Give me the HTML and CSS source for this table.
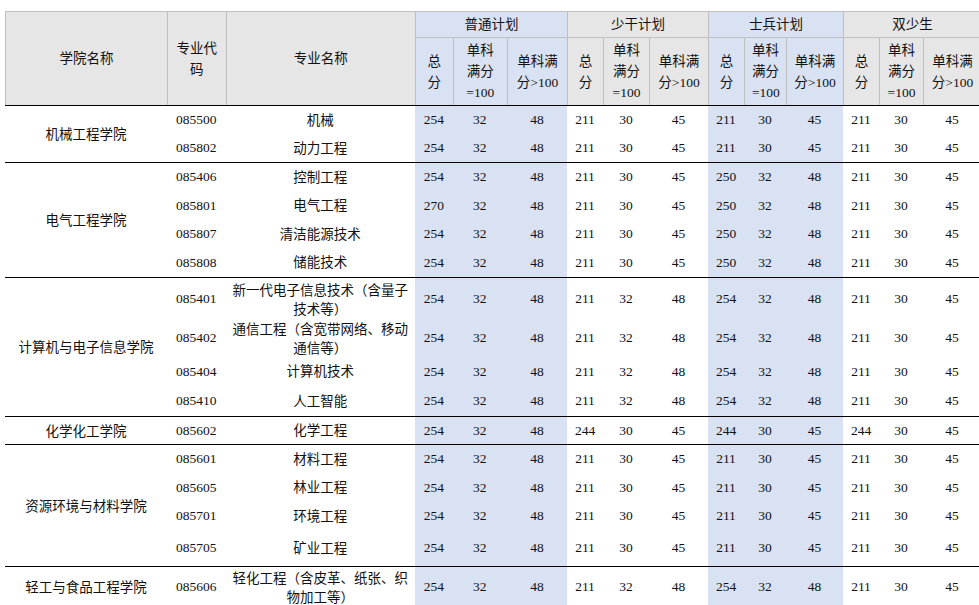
FILE: index.html
```html
<!DOCTYPE html>
<html lang="zh-CN">
<head>
<meta charset="utf-8">
<title>复试分数线</title>
<link rel="stylesheet" href="styles.css">
</head>
<body>
<div class="wrap">
<table class="score">
  <colgroup>
    <col class="c-college"><col class="c-code"><col class="c-major">
    <col class="c-t1"><col class="c-s1"><col class="c-m1">
    <col class="c-t2"><col class="c-s2"><col class="c-m2">
    <col class="c-t3"><col class="c-s3"><col class="c-m3">
    <col class="c-t4"><col class="c-s4"><col class="c-m4">
  </colgroup>
  <thead>
    <tr class="hr1">
      <th rowspan="2" class="grey">学院名称</th>
      <th rowspan="2" class="grey sub">专业代码</th>
      <th rowspan="2" class="grey">专业名称</th>
      <th colspan="3" class="blue">普通计划</th>
      <th colspan="3" class="grey">少干计划</th>
      <th colspan="3" class="blue">士兵计划</th>
      <th colspan="3" class="grey">双少生</th>
    </tr>
    <tr class="hr2">
      <th class="blue sub">总分</th><th class="blue sub">单科满分=100</th><th class="blue sub">单科满分&gt;100</th>
      <th class="grey sub">总分</th><th class="grey sub">单科满分=100</th><th class="grey sub">单科满分&gt;100</th>
      <th class="blue sub">总分</th><th class="blue sub">单科满分=100</th><th class="blue sub">单科满分&gt;100</th>
      <th class="grey sub">总分</th><th class="grey sub">单科满分=100</th><th class="grey sub">单科满分&gt;100</th>
    </tr>
  </thead>
  <tbody>
    <tr class="g h29">
      <td rowspan="2" class="cn">机械工程学院</td><td>085500</td><td class="major">机械</td>
      <td class="b">254</td><td class="b">32</td><td class="b">48</td>
      <td>211</td><td>30</td><td>45</td>
      <td class="b">211</td><td class="b">30</td><td class="b">45</td>
      <td>211</td><td>30</td><td>45</td>
    </tr>
    <tr class="h28">
      <td>085802</td><td class="major">动力工程</td>
      <td class="b">254</td><td class="b">32</td><td class="b">48</td>
      <td>211</td><td>30</td><td>45</td>
      <td class="b">211</td><td class="b">30</td><td class="b">45</td>
      <td>211</td><td>30</td><td>45</td>
    </tr>

    <tr class="g h29">
      <td rowspan="4" class="cn">电气工程学院</td><td>085406</td><td class="major">控制工程</td>
      <td class="b">254</td><td class="b">32</td><td class="b">48</td>
      <td>211</td><td>30</td><td>45</td>
      <td class="b">250</td><td class="b">32</td><td class="b">48</td>
      <td>211</td><td>30</td><td>45</td>
    </tr>
    <tr class="h29">
      <td>085801</td><td class="major">电气工程</td>
      <td class="b">270</td><td class="b">32</td><td class="b">48</td>
      <td>211</td><td>30</td><td>45</td>
      <td class="b">250</td><td class="b">32</td><td class="b">48</td>
      <td>211</td><td>30</td><td>45</td>
    </tr>
    <tr class="h28">
      <td>085807</td><td class="major">清洁能源技术</td>
      <td class="b">254</td><td class="b">32</td><td class="b">48</td>
      <td>211</td><td>30</td><td>45</td>
      <td class="b">250</td><td class="b">32</td><td class="b">48</td>
      <td>211</td><td>30</td><td>45</td>
    </tr>
    <tr class="h29">
      <td>085808</td><td class="major">储能技术</td>
      <td class="b">254</td><td class="b">32</td><td class="b">48</td>
      <td>211</td><td>30</td><td>45</td>
      <td class="b">250</td><td class="b">32</td><td class="b">48</td>
      <td>211</td><td>30</td><td>45</td>
    </tr>

    <tr class="g h42">
      <td rowspan="4" class="cn">计算机与电子信息学院</td><td>085401</td><td class="major ml">新一代电子信息技术（含量子技术等）</td>
      <td class="b">254</td><td class="b">32</td><td class="b">48</td>
      <td>211</td><td>32</td><td>48</td>
      <td class="b">254</td><td class="b">32</td><td class="b">48</td>
      <td>211</td><td>30</td><td>45</td>
    </tr>
    <tr class="h38">
      <td>085402</td><td class="major ml">通信工程（含宽带网络、移动通信等）</td>
      <td class="b">254</td><td class="b">32</td><td class="b">48</td>
      <td>211</td><td>32</td><td>48</td>
      <td class="b">254</td><td class="b">32</td><td class="b">48</td>
      <td>211</td><td>30</td><td>45</td>
    </tr>
    <tr class="h29">
      <td>085404</td><td class="major">计算机技术</td>
      <td class="b">254</td><td class="b">32</td><td class="b">48</td>
      <td>211</td><td>32</td><td>48</td>
      <td class="b">254</td><td class="b">32</td><td class="b">48</td>
      <td>211</td><td>30</td><td>45</td>
    </tr>
    <tr class="h30">
      <td>085410</td><td class="major">人工智能</td>
      <td class="b">254</td><td class="b">32</td><td class="b">48</td>
      <td>211</td><td>32</td><td>48</td>
      <td class="b">254</td><td class="b">32</td><td class="b">48</td>
      <td>211</td><td>30</td><td>45</td>
    </tr>

    <tr class="g h28">
      <td class="cn">化学化工学院</td><td>085602</td><td class="major">化学工程</td>
      <td class="b">254</td><td class="b">32</td><td class="b">48</td>
      <td>244</td><td>30</td><td>45</td>
      <td class="b">244</td><td class="b">30</td><td class="b">45</td>
      <td>244</td><td>30</td><td>45</td>
    </tr>

    <tr class="g h29">
      <td rowspan="4" class="cn">资源环境与材料学院</td><td>085601</td><td class="major">材料工程</td>
      <td class="b">254</td><td class="b">32</td><td class="b">48</td>
      <td>211</td><td>30</td><td>45</td>
      <td class="b">211</td><td class="b">30</td><td class="b">45</td>
      <td>211</td><td>30</td><td>45</td>
    </tr>
    <tr class="h29">
      <td>085605</td><td class="major">林业工程</td>
      <td class="b">254</td><td class="b">32</td><td class="b">48</td>
      <td>211</td><td>30</td><td>45</td>
      <td class="b">211</td><td class="b">30</td><td class="b">45</td>
      <td>211</td><td>30</td><td>45</td>
    </tr>
    <tr class="h28">
      <td>085701</td><td class="major">环境工程</td>
      <td class="b">254</td><td class="b">32</td><td class="b">48</td>
      <td>211</td><td>30</td><td>45</td>
      <td class="b">211</td><td class="b">30</td><td class="b">45</td>
      <td>211</td><td>30</td><td>45</td>
    </tr>
    <tr class="h36">
      <td>085705</td><td class="major">矿业工程</td>
      <td class="b">254</td><td class="b">32</td><td class="b">48</td>
      <td>211</td><td>30</td><td>45</td>
      <td class="b">211</td><td class="b">30</td><td class="b">45</td>
      <td>211</td><td>30</td><td>45</td>
    </tr>

    <tr class="g h40">
      <td class="cn">轻工与食品工程学院</td><td>085606</td><td class="major ml">轻化工程（含皮革、纸张、织物加工等）</td>
      <td class="b">254</td><td class="b">32</td><td class="b">48</td>
      <td>211</td><td>32</td><td>48</td>
      <td class="b">254</td><td class="b">32</td><td class="b">48</td>
      <td>211</td><td>30</td><td>45</td>
    </tr>
  </tbody>
</table>
</div>
</body>
</html>
```

FILE: styles.css
```css
html, body {
  margin: 0;
  padding: 0;
  background: #ffffff;
}

.wrap {
  width: 979px;
  height: 605px;
  overflow: hidden;
  padding: 11px 0 0 5px;
  box-sizing: border-box;
}

.score {
  table-layout: fixed;
  width: 976px;
  border-collapse: separate;
  border-spacing: 0;
  font-family: "Liberation Serif", "Noto Sans CJK SC", serif;
  font-size: 13.5px;
  color: #111111;
}

.c-college { width: 162px; }
.c-code { width: 58.5px; }
.c-major { width: 189.5px; }
.c-t1 { width: 37.5px; }
.c-s1 { width: 54.5px; }
.c-m1 { width: 60px; }
.c-t2 { width: 36px; }
.c-s2 { width: 46px; }
.c-m2 { width: 59px; }
.c-t3 { width: 36px; }
.c-s3 { width: 42px; }
.c-m3 { width: 57px; }
.c-t4 { width: 36px; }
.c-s4 { width: 44px; }
.c-m4 { width: 58px; }

.score th {
  font-weight: normal;
  border-top: 1px solid #bfbfbf;
  border-left: 1px solid #bfbfbf;
  padding: 0 4px;
  line-height: 21px;
  text-align: center;
  vertical-align: middle;
}

.score th.sub {
  padding: 0 7px;
}

.score th.grey { background: #e7e6e6; }
.score th.blue { background: #d9e2f3; }

.hr1 { height: 26px; }
.hr2 { height: 68px; }

.score td {
  padding: 0 4px;
  text-align: center;
  vertical-align: middle;
  line-height: 20px;
}

.score td.cn,
.score td.major {
  font-family: "Noto Sans CJK SC", sans-serif;
  padding-bottom: 2px;
}

.score td.major {
  padding-left: 6px;
  padding-right: 6px;
  line-height: 19px;
}

.score td.major.ml {
  padding-bottom: 0;
}

.score td.b { background: #d9e2f3; }

.score tr.g td { border-top: 1px solid #000000; }

.h28 { height: 28px; }
.h29 { height: 29px; }
.h30 { height: 30px; }
.h36 { height: 36px; }
.h38 { height: 38px; }
.h40 { height: 40px; }
.h42 { height: 42px; }
```
